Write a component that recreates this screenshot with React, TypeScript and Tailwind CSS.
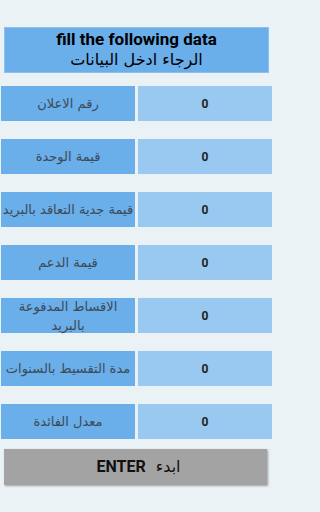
import React from "react";

const rows: { t: string; nw?: boolean }[] = [
  { t: "رقم الاعلان" },
  { t: "قيمة الوحدة" },
  { t: "قيمة جدية التعاقد بالبريد", nw: true },
  { t: "قيمة الدعم" },
  { t: "الاقساط  المدفوعة بالبريد" },
  { t: "مدة التقسيط بالسنوات" },
  { t: "معدل الفائدة" },
];

export default function App() {
  return (
    <div className="w-full min-h-[512px] bg-[#eaf2f6] overflow-hidden">
      <div className="w-[273px] flex flex-col">
        <div className="mt-[27px] mx-[4px] h-[46px] bg-[#6aaeea] border border-[#8cc0ee] flex flex-col items-center justify-center">
          <div className="text-[17px] leading-[19px] font-bold text-black font-[Roboto,sans-serif]">
            fill the following data
          </div>
          <div dir="rtl" className="text-[16px] leading-[21px] text-black font-['DejaVu_Sans',sans-serif]">
            الرجاء ادخل البيانات
          </div>
        </div>
        <div className="mt-[13px] flex flex-col gap-[18px]">
          {rows.map((r, i) => (
            <div key={i} className="flex h-[35px] pl-[1px] gap-[3px]">
              <div
                dir="rtl"
                className={
                  r.nw
                    ? "w-[134px] h-[35px] bg-[#6aaeea] flex items-center justify-center text-center text-[13px] leading-[19px] text-[#3d4a57] whitespace-nowrap tracking-[-0.3px] font-['DejaVu_Sans',sans-serif]"
                    : "w-[134px] h-[35px] bg-[#6aaeea] flex items-center justify-center text-center text-[13px] leading-[19px] text-[#3d4a57] px-[2px] font-['DejaVu_Sans',sans-serif]"
                }
              >
                {r.t}
              </div>
              <div className="w-[134px] h-[35px] bg-[#99c9f0] flex items-center justify-center text-[12px] font-bold text-[#222] font-[Roboto,sans-serif]">
                0
              </div>
            </div>
          ))}
        </div>
        <div className="mt-[10px] mx-[4px] w-[263px] h-[36px] bg-[#a3a3a3] shadow-[1px_1px_2px_rgba(0,0,0,0.35)] flex items-center justify-center gap-[10px] pl-[6px]">
          <span className="text-[16px] font-bold text-[#111] font-[Roboto,sans-serif]">ENTER</span>
          <span className="text-[16px] text-[#111] font-['DejaVu_Sans',sans-serif]">ابدء</span>
        </div>
      </div>
    </div>
  );
}
